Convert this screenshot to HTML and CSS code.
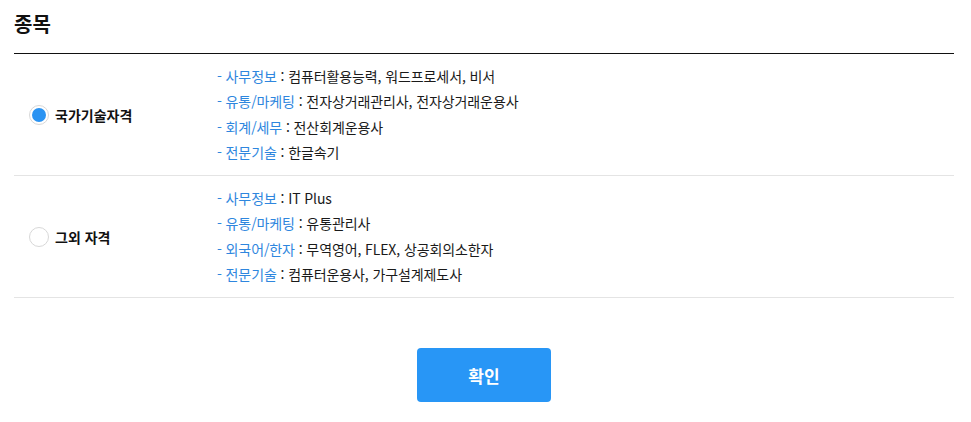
FILE: index.html
```html
<!DOCTYPE html>
<html lang="ko">
<head>
<meta charset="utf-8">
<link rel="stylesheet" href="styles.css">
</head>
<body>
<div class="wrap">
  <h2 class="title">종목</h2>
  <div class="table">
    <div class="row">
      <label class="opt"><span class="radio checked"></span><span class="opt-label">국가기술자격</span></label>
      <ul class="list">
        <li><span class="cat">- 사무정보</span> : 컴퓨터활용능력, 워드프로세서, 비서</li>
        <li><span class="cat">- 유통/마케팅</span> : 전자상거래관리사, 전자상거래운용사</li>
        <li><span class="cat">- 회계/세무</span> : 전산회계운용사</li>
        <li><span class="cat">- 전문기술</span> : 한글속기</li>
      </ul>
    </div>
    <div class="row">
      <label class="opt"><span class="radio"></span><span class="opt-label">그외 자격</span></label>
      <ul class="list">
        <li><span class="cat">- 사무정보</span> : IT Plus</li>
        <li><span class="cat">- 유통/마케팅</span> : 유통관리사</li>
        <li><span class="cat">- 외국어/한자</span> : 무역영어, FLEX, 상공회의소한자</li>
        <li><span class="cat">- 전문기술</span> : 컴퓨터운용사, 가구설계제도사</li>
      </ul>
    </div>
  </div>
  <div class="actions">
    <button class="btn" type="button">확인</button>
  </div>
</div>
</body>
</html>
```
FILE: styles.css
```css
* { box-sizing: border-box; }
body {
  margin: 0;
  background: #fff;
  font-family: "Noto Sans CJK KR", "Noto Sans", sans-serif;
  color: #222;
}
.wrap {
  width: 940px;
  margin-left: 14px;
}
.title {
  margin: 0;
  padding-top: 10px;
  height: 54px;
  font-size: 20px;
  line-height: 28px;
  font-weight: 700;
  color: #111;
  border-bottom: 1px solid #111;
}
.row {
  display: grid;
  grid-template-columns: 202px 1fr;
  align-items: center;
  height: 122px;
  border-bottom: 1px solid #e4e4e4;
}
.opt {
  display: flex;
  align-items: center;
  padding-left: 15px;
  gap: 6px;
}
.radio {
  width: 20px;
  height: 20px;
  border-radius: 50%;
  border: 1px solid #d8d8d8;
  background: #fff;
  display: flex;
  align-items: center;
  justify-content: center;
}
.radio.checked::after {
  content: "";
  width: 14px;
  height: 14px;
  border-radius: 50%;
  background: #2a93f2;
}
.opt-label {
  font-size: 14px;
  font-weight: 700;
  color: #111;
}
.list {
  list-style: none;
  margin: 0;
  padding: 0 0 0 1px;
  font-size: 14px;
  line-height: 25.3px;
  color: #1a1a1a;
  letter-spacing: -0.1px;
}
.cat {
  color: #2e86de;
}
.actions {
  display: flex;
  justify-content: center;
  padding-top: 50px;
}
.btn {
  width: 134px;
  height: 54px;
  border: 0;
  border-radius: 4px;
  background: #2896f6;
  color: #fff;
  font-family: inherit;
  font-size: 17px;
  font-weight: 700;
}
```
